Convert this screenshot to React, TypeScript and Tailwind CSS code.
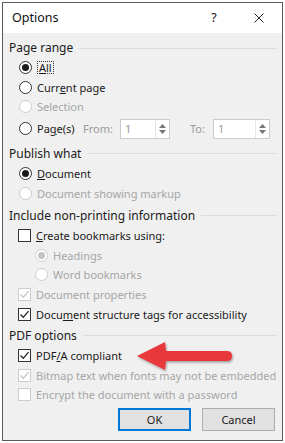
import React from "react";

const font = { fontFamily: '"Noto Sans", "Open Sans", sans-serif' };

function Radio({ checked, disabled }: { checked?: boolean; disabled?: boolean }) {
  return (
    <span
      className={`flex h-[13px] w-[13px] shrink-0 items-center justify-center rounded-full border bg-white ${
        disabled ? "border-[#cccccc]" : "border-[#333333]"
      }`}
    >
      {checked && (
        <span className={`h-[7px] w-[7px] rounded-full ${disabled ? "bg-[#c4c4c4]" : "bg-[#1a1a1a]"}`} />
      )}
    </span>
  );
}

function Check({ checked, disabled }: { checked?: boolean; disabled?: boolean }) {
  return (
    <span
      className={`flex h-[13px] w-[13px] shrink-0 items-center justify-center border bg-white ${
        disabled ? "border-[#cccccc]" : "border-[#333333]"
      }`}
    >
      {checked && (
        <svg width="11" height="11" viewBox="0 0 11 11">
          <path d="M1.5 5.5 L4.3 8.3 L9.5 2.2" fill="none" stroke={disabled ? "#c4c4c4" : "#222"} strokeWidth="1.3" />
        </svg>
      )}
    </span>
  );
}

function GroupLabel({ children }: { children: React.ReactNode }) {
  return (
    <div className="flex h-[20px] items-center gap-[6px] pl-[6px] pr-[5px]">
      <span className="text-[12px] text-[#1a1a1a]">{children}</span>
      <span className="h-px flex-1 bg-[#dcdcdc]" />
    </div>
  );
}

function Row({ indent, children }: { indent: string; children: React.ReactNode }) {
  return <div className={`flex h-[19.6px] items-center gap-[5px] ${indent}`}>{children}</div>;
}

function Spin({ w }: { w: string }) {
  return (
    <div className={`flex h-[20px] items-center border border-[#cccccc] bg-white ${w}`}>
      <span className="flex-1 pl-[4px] text-[#9a9a9a]">1</span>
      <div className="flex h-full w-[14px] flex-col items-center justify-center gap-[2px] border-l border-[#e8e8e8]">
        <svg width="7" height="4" viewBox="0 0 7 4">
          <path d="M0 4 L3.5 0 L7 4 Z" fill="#777" />
        </svg>
        <svg width="7" height="4" viewBox="0 0 7 4">
          <path d="M0 0 L3.5 4 L7 0 Z" fill="#777" />
        </svg>
      </div>
    </div>
  );
}

export default function App() {
  return (
    <div className="h-[443px] w-[285px] bg-white p-[2px] text-[11px] leading-none" style={font}>
      <div className="relative flex h-[439px] flex-col border border-[#5a5a5a] bg-[#f0f0f0]">
        {/* title bar */}
        <div className="flex h-[30px] shrink-0 items-center bg-white pl-[9px]">
          <span className="flex-1 text-[12.5px] text-[#111]">Options</span>
          <span className="w-[44px] text-center text-[12.5px] text-[#111]">?</span>
          <span className="flex w-[46px] items-center justify-center">
            <svg width="10" height="10" viewBox="0 0 10 10">
              <path d="M0.5 0.5 L9.5 9.5 M9.5 0.5 L0.5 9.5" stroke="#222" strokeWidth="1" />
            </svg>
          </span>
        </div>

        <div className="flex flex-col pt-[5px]">
          <GroupLabel>Page range</GroupLabel>
          <Row indent="pl-[16px]">
            <Radio checked />
            <span className="border border-dotted border-[#333] px-px text-[#1a1a1a]">
              <span className="underline">A</span>ll
            </span>
          </Row>
          <Row indent="pl-[16px]">
            <Radio />
            <span className="text-[#1a1a1a]">
              Curr<span className="underline">e</span>nt page
            </span>
          </Row>
          <Row indent="pl-[16px]">
            <Radio disabled />
            <span className="text-[#a6a6a6]">Selection</span>
          </Row>
          <div className="flex h-[24px] items-center pl-[16px]">
            <Radio />
            <span className="ml-[5px] w-[46px] text-[#1a1a1a]">
              Pa<span className="underline">g</span>e(s)
            </span>
            <span className="w-[37px] text-[#9a9a9a]">From:</span>
            <Spin w="w-[50px]" />
            <span className="ml-[20px] w-[23px] text-[#9a9a9a]">To:</span>
            <Spin w="w-[57px]" />
          </div>

          <div className="h-[3px]" />
          <GroupLabel>Publish what</GroupLabel>
          <Row indent="pl-[16px]">
            <Radio checked />
            <span className="text-[#1a1a1a]">
              <span className="underline">D</span>ocument
            </span>
          </Row>
          <Row indent="pl-[16px]">
            <Radio disabled />
            <span className="text-[#a6a6a6]">Document showing markup</span>
          </Row>

          <div className="h-[3px]" />
          <GroupLabel>Include non-printing information</GroupLabel>
          <Row indent="pl-[15px]">
            <Check />
            <span className="text-[#1a1a1a]">
              <span className="underline">C</span>reate bookmarks using:
            </span>
          </Row>
          <Row indent="pl-[32px]">
            <Radio checked disabled />
            <span className="text-[#a6a6a6]">Headings</span>
          </Row>
          <Row indent="pl-[32px]">
            <Radio disabled />
            <span className="text-[#a6a6a6]">Word bookmarks</span>
          </Row>
          <Row indent="pl-[15px]">
            <Check checked disabled />
            <span className="text-[#a6a6a6]">Document properties</span>
          </Row>
          <Row indent="pl-[15px]">
            <Check checked />
            <span className="text-[#1a1a1a]">
              Docu<span className="underline">m</span>ent structure tags for accessibility
            </span>
          </Row>

          <div className="h-[2px]" />
          <GroupLabel>PDF options</GroupLabel>
          <Row indent="pl-[15px]">
            <Check checked />
            <span className="text-[#1a1a1a]">
              PDF<span className="underline">/</span>A compliant
            </span>
          </Row>
          <Row indent="pl-[15px]">
            <Check checked disabled />
            <span className="text-[#a6a6a6]">Bitmap text when fonts may not be embedded</span>
          </Row>
          <Row indent="pl-[15px]">
            <Check disabled />
            <span className="text-[#a6a6a6]">Encrypt the document with a password</span>
          </Row>

          <div className="mt-[3px] flex justify-end gap-[11px] pr-[7px]">
            <button className="flex h-[23px] w-[73px] items-center justify-center border-2 border-[#0078d7] bg-[#e1e1e1] text-[#1a1a1a]">
              OK
            </button>
            <button className="flex h-[23px] w-[73px] items-center justify-center border border-[#adadad] bg-[#e1e1e1] text-[#1a1a1a]">
              Cancel
            </button>
          </div>
        </div>

        {/* red arrow annotation */}
        <svg className="absolute left-[130px] top-[335px]" width="104" height="36" viewBox="0 0 104 36">
          <defs>
            <filter id="sh" x="-10%" y="-20%" width="130%" height="150%">
              <feDropShadow dx="1" dy="1.5" stdDeviation="1.2" floodColor="#000" floodOpacity="0.35" />
            </filter>
          </defs>
          <path
            d="M4 18 L32 4 L33 13 L94 13 Q99 13 99 18 Q99 23 94 23 L33 23 L32 32 Z"
            fill="#e8383b"
            filter="url(#sh)"
          />
        </svg>
      </div>
    </div>
  );
}
